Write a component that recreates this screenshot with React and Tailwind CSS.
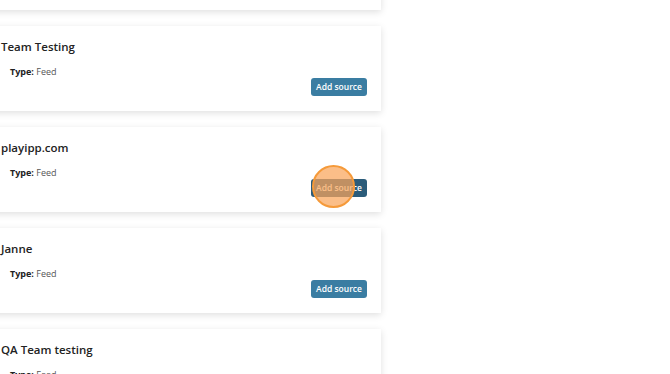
import React from 'react';

// Feed sources shown in the list
const sources = [
    { id: 0, name: "Team Sources" },
    { id: 1, name: "Team Testing" },
    { id: 2, name: "playipp.com", active: true },
    { id: 3, name: "Janne" },
    { id: 4, name: "QA Team testing" },
];

const SourceCard = ({ source }) => {
    const { name, active = false } = source;
    return (
        <div className="relative w-[396px] h-[85px] bg-white shadow-[0_2px_7px_rgba(0,0,0,0.13)] pt-[12px] pl-[16px] pr-[14px]">
            <h3 className="text-[11.5px] leading-[18px] font-semibold text-[#222]">{name}</h3>
            <p className="mt-[9px] ml-[9px] text-[9px] leading-[14px] text-[#555]">
                <span className="font-bold text-[#222]">Type:</span> Feed
            </p>
            <div className="flex justify-end -mt-[1px]">
                <button
                    className={`h-[18px] w-[56px] rounded-[3px] text-[8.5px] font-semibold text-white ${active ? 'bg-[#2b5c7a]' : 'bg-[#3a7da2]'}`}
                >
                    Add source
                </button>
            </div>
            {/* click highlight over the button */}
            {active && (
                <div className="absolute left-[327px] top-[38px] w-[43px] h-[43px] rounded-full border-2 border-[#f59a3a] bg-[rgba(250,165,90,0.72)]"></div>
            )}
        </div>
    );
};

export default function App() {
    return (
        <div className="w-[670px] h-[374px] overflow-hidden bg-white" style={{ fontFamily: '"Open Sans", sans-serif' }}>
            <div className="-ml-[15px] -mt-[75px] flex flex-col gap-[16px]">
                {sources.map((s) => (
                    <SourceCard key={s.id} source={s} />
                ))}
            </div>
        </div>
    );
}
